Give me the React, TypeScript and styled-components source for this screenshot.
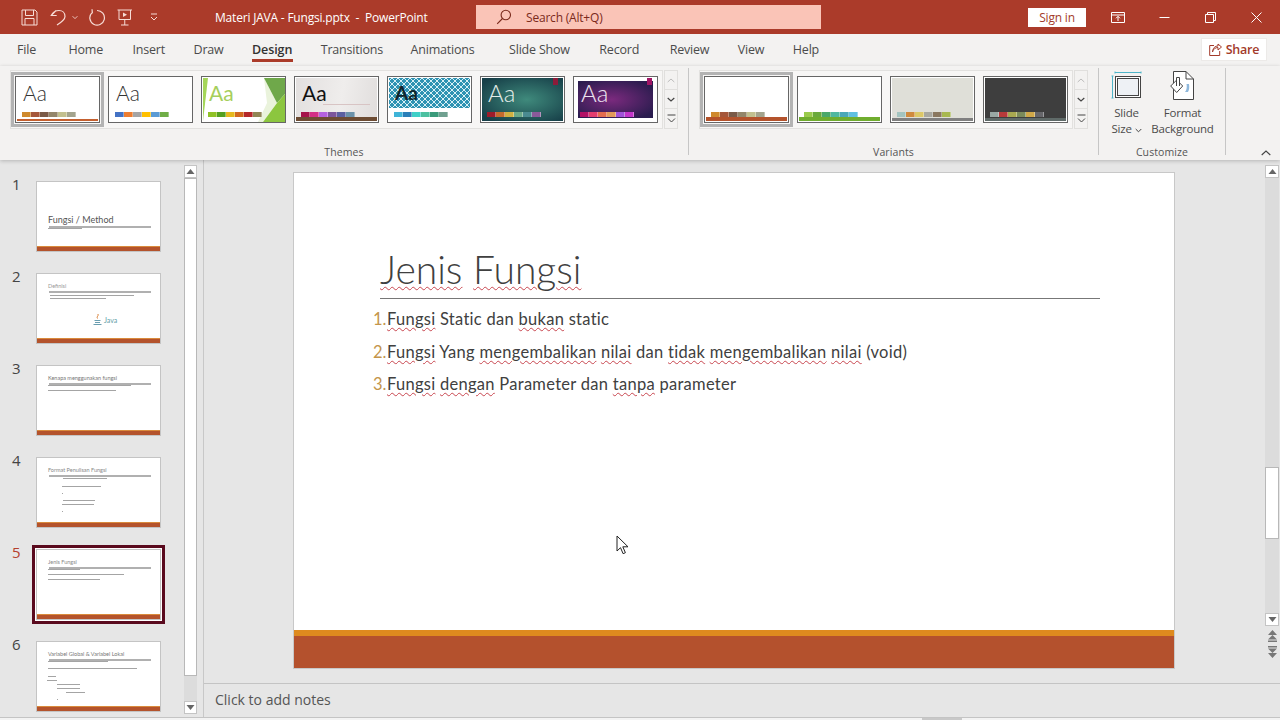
import React from 'react';
import styled, { createGlobalStyle } from 'styled-components';

const uiFont = '"Open Sans", "Noto Sans", "Liberation Sans", sans-serif';
const slideFont = 'Lato, "Open Sans", "Liberation Sans", sans-serif';

const GlobalStyle = createGlobalStyle`
  html, body { margin: 0; padding: 0; background: #e6e6e6; }
  * { box-sizing: border-box; }
`;

const Window = styled.div`
  position: relative;
  width: 1280px;
  height: 720px;
  overflow: hidden;
  display: flex;
  flex-direction: column;
  font-family: ${uiFont};
  color: #444;
`;

/* title bar */
const TitleBar = styled.header`
  height: 34px;
  flex: none;
  display: flex;
  align-items: center;
  padding: 0 0 0 14px;
  background: #ab3b2a;
  color: #fff;
`;
const QatButton = styled.div<{ $w: number }>`
  width: ${(p) => p.$w}px;
  height: 34px;
  display: flex;
  align-items: center;
  justify-content: center;
`;
const DocTitle = styled.div`
  width: 261px;
  margin-left: 41px;
  font-size: 12px;
  letter-spacing: -0.2px;
  white-space: pre;
`;
const SearchBox = styled.div`
  width: 345px;
  height: 24px;
  display: flex;
  align-items: center;
  padding-left: 20px;
  gap: 14px;
  background: #fac4b7;
  color: #7a2a1c;
  font-size: 12px;
  letter-spacing: -0.2px;
`;
const SignIn = styled.div`
  width: 58px;
  height: 19px;
  margin-left: auto;
  margin-right: 9px;
  display: flex;
  align-items: center;
  justify-content: center;
  background: #fff;
  color: #a33a2a;
  font-size: 12px;
  letter-spacing: -0.2px;
`;
const WindowControls = styled.div`
  display: flex;
  margin-right: 1px;
`;
const WindowButton = styled.div`
  width: 46px;
  height: 34px;
  display: flex;
  align-items: center;
  justify-content: center;
`;

/* tabs */
const TabRow = styled.nav`
  height: 32px;
  flex: none;
  display: flex;
  align-items: center;
  padding-left: 17px;
  background: #f3f2f1;
  font-size: 12.5px;
  letter-spacing: -0.2px;
  color: #4b4b4b;
`;
const Tab = styled.div<{ $active?: boolean; $gap: number }>`
  position: relative;
  height: 32px;
  line-height: 31px;
  margin-left: ${(p) => p.$gap}px;
  white-space: nowrap;
  ${(p) => p.$active && 'color: #333; font-weight: 600; letter-spacing: -0.1px;'}
  &::after {
    content: '';
    display: ${(p) => (p.$active ? 'block' : 'none')};
    position: absolute;
    left: 0;
    right: -1px;
    bottom: 4px;
    height: 3px;
    background: #ab3b2a;
  }
`;
const ShareButton = styled.div`
  width: 66px;
  height: 23px;
  margin-left: auto;
  margin-right: 13px;
  margin-top: -2px;
  display: flex;
  align-items: center;
  justify-content: center;
  gap: 4px;
  background: #fff;
  border: 1px solid #eceae8;
  color: #a33a2a;
  font-size: 12.5px;
  font-weight: 600;
  letter-spacing: -0.2px;
`;

/* ribbon */
const Ribbon = styled.section`
  position: relative;
  z-index: 1;
  height: 94px;
  flex: none;
  display: flex;
  padding: 2px 0 0 10px;
  background: #f3f2f1;
  box-shadow: 0 1px 4px rgba(0, 0, 0, 0.22);
`;
const RibbonGroup = styled.div<{ $w: number; $pad?: number }>`
  width: ${(p) => p.$w}px;
  height: 91px;
  display: flex;
  flex-direction: column;
  padding-left: ${(p) => p.$pad ?? 0}px;
  background: linear-gradient(#c6c6c6, #c6c6c6) right top / 1px 87px no-repeat;
`;
const GroupBody = styled.div`
  display: flex;
  margin-top: 2px;
`;
const GroupLabel = styled.div<{ $trim: number }>`
  margin-top: auto;
  height: 14px;
  line-height: 14px;
  text-align: center;
  font-size: 10.5px;
  letter-spacing: 0.1px;
  color: #555;
  padding-right: ${(p) => p.$trim}px;
`;
const Gallery = styled.div`
  display: flex;
  height: 59px;
  padding: 1px 0;
  border: 1px solid #e2e1df;
  background: #f7f6f5;
`;
const CardFrame = styled.div<{ $selected?: boolean }>`
  width: 93px;
  height: 55px;
  padding: 1px;
  border: 3px solid ${(p) => (p.$selected ? '#b3b3b3' : 'transparent')};
  background: ${(p) => (p.$selected ? '#f7f6f5' : 'transparent')};
`;
const Card = styled.div<{ $bg: string; $ring?: boolean }>`
  position: relative;
  width: 85px;
  height: 47px;
  overflow: hidden;
  display: flex;
  flex-direction: column;
  border: 1px solid #666;
  background: ${(p) => p.$bg};
  ${(p) => p.$ring && 'box-shadow: inset 0 0 0 1px #fff;'}
`;
const CardLetters = styled.div<{ $color: string; $weight: number; $size: number }>`
  position: relative;
  height: 30px;
  padding: 3px 0 0 7px;
  font-size: ${(p) => p.$size}px;
  line-height: 26px;
  font-family: ${slideFont};
  font-weight: ${(p) => p.$weight};
  color: ${(p) => p.$color};
`;
const SwatchRow = styled.div`
  position: relative;
  display: flex;
  height: 5px;
  margin-top: auto;
  margin-bottom: 5px;
  padding-left: 6px;
`;
const Swatch = styled.span<{ $color: string }>`
  width: 9px;
  height: 5px;
  background: ${(p) => p.$color};
  border-right: 1px solid rgba(255, 255, 255, 0.35);
`;
const CardBar = styled.div<{ $color: string; $h: number; $inset: number }>`
  position: absolute;
  left: ${(p) => p.$inset}px;
  right: ${(p) => p.$inset}px;
  bottom: 1px;
  height: ${(p) => p.$h}px;
  background: ${(p) => p.$color};
`;
const CardPattern = styled.div`
  position: absolute;
  left: 1px;
  right: 1px;
  top: 1px;
  height: 30px;
  background:
    radial-gradient(circle at center, transparent 0 1.6px, #d9f0f5 1.6px 2.6px, transparent 2.6px) 0 0 / 6px 6px,
    #2f93b3;
`;
const CardTag = styled.div<{ $color: string; $right: number }>`
  position: absolute;
  top: 1px;
  right: ${(p) => p.$right}px;
  width: 5px;
  height: 7px;
  background: ${(p) => p.$color};
`;
const CardFill = styled.div<{ $bg: string }>`
  position: absolute;
  left: 4px;
  right: 4px;
  top: 4px;
  bottom: 4px;
  background: ${(p) => p.$bg};
`;
const CardHairline = styled.div`
  position: absolute;
  left: 28px;
  right: 8px;
  top: 27px;
  height: 1px;
  background: #d8c4c4;
`;
const GalleryArrows = styled.div`
  display: flex;
  flex-direction: column;
  margin-left: 1px;
  height: 59px;
`;
const ArrowCell = styled.div<{ $dim?: boolean; $h: number }>`
  width: 14px;
  height: ${(p) => p.$h}px;
  display: flex;
  align-items: center;
  justify-content: center;
  border: 1px solid #e0dfdd;
  border-top-width: ${(p) => (p.$dim ? 1 : 0)}px;
`;
const CommandRow = styled.div`
  display: flex;
`;
const Command = styled.div<{ $w: number }>`
  width: ${(p) => p.$w}px;
  display: flex;
  flex-direction: column;
  align-items: center;
  font-size: 11.5px;
  line-height: 15.5px;
  letter-spacing: -0.2px;
  color: #4b4b4b;
  white-space: nowrap;
`;
const CommandIcon = styled.div`
  height: 37px;
  padding-top: 3px;
`;
const CollapseButton = styled.div`
  display: flex;
  margin-left: 35px;
  margin-top: 82px;
  height: 6px;
`;

/* workspace */
const Workspace = styled.main`
  flex: 1;
  min-height: 0;
  display: flex;
  background: #e6e6e6;
  border-bottom: 1px solid #c4c4c4;
`;
const ThumbPane = styled.aside`
  width: 204px;
  flex: none;
  display: flex;
  border-right: 1px solid #c8c8c8;
`;
const ThumbList = styled.div`
  width: 184px;
  padding-top: 17px;
  overflow: hidden;
`;
const ThumbRow = styled.div`
  height: 92px;
  display: flex;
  padding-left: 12px;
`;
const ThumbNumber = styled.div<{ $active?: boolean }>`
  width: 20px;
  margin-top: -1px;
  font-size: 15px;
  line-height: 16px;
  color: ${(p) => (p.$active ? '#b5402e' : '#444')};
`;
const ThumbFrame = styled.div<{ $active?: boolean }>`
  width: 133px;
  height: 79px;
  padding: 1px;
  border: 3px solid ${(p) => (p.$active ? '#5a0a1e' : 'transparent')};
  background: ${(p) => (p.$active ? '#fff' : 'transparent')};
`;
const Thumb = styled.div<{ $top: number }>`
  width: 125px;
  height: 71px;
  display: flex;
  flex-direction: column;
  padding-top: ${(p) => p.$top}px;
  background: #fff;
  border: 1px solid #c4c4c4;
  font-family: ${slideFont};
`;
const ThumbTitle = styled.div<{ $size: number; $h: number; $color: string }>`
  height: ${(p) => p.$h}px;
  line-height: ${(p) => p.$h}px;
  margin-left: 11px;
  font-size: ${(p) => p.$size}px;
  color: ${(p) => p.$color};
  white-space: nowrap;
`;
const ThumbRule = styled.div`
  width: 102px;
  height: 2px;
  flex: none;
  margin-left: 12px;
  background: #b0b0b0;
`;
const ThumbLine = styled.div<{ $left: number; $w: number; $gap: number }>`
  width: ${(p) => p.$w}px;
  height: 1px;
  flex: none;
  margin: ${(p) => p.$gap}px 0 0 ${(p) => p.$left}px;
  background: #a4a4a4;
`;
const ThumbFooter = styled.div`
  margin-top: auto;
  height: 5px;
  background: #b4532c;
  border-top: 1px solid #d98a3c;
`;
const JavaMark = styled.div`
  display: flex;
  align-items: center;
  gap: 1px;
  margin: 15px 0 0 56px;
  font-size: 7px;
  line-height: 10px;
  color: #5f9ea8;
`;
const ScrollColumn = styled.div`
  width: 13px;
  display: flex;
  flex-direction: column;
  padding-top: 5px;
`;
const ScrollButton = styled.div`
  width: 100%;
  height: 13px;
  flex: none;
  display: flex;
  align-items: center;
  justify-content: center;
  background: #fff;
  border: 1px solid #c4c4c4;
`;
const ScrollTrack = styled.div<{ $h: number }>`
  height: ${(p) => p.$h}px;
  flex: none;
  overflow: hidden;
  background: #dcdcdc;
`;
const ScrollThumb = styled.div<{ $top: number; $h: number }>`
  height: ${(p) => p.$h}px;
  margin-top: ${(p) => p.$top}px;
  background: #fff;
  border: 1px solid #b8b8b8;
`;
const EditorColumn = styled.div`
  flex: 1;
  min-width: 0;
  display: flex;
  flex-direction: column;
`;
const EditorRow = styled.div`
  height: 523px;
  flex: none;
  display: flex;
`;
const CanvasArea = styled.div`
  flex: 1;
  padding: 13px 0 0 90px;
`;
const SlideSheet = styled.article`
  width: 880px;
  height: 495px;
  display: flex;
  flex-direction: column;
  background: #fff;
  box-shadow: 0 0 0 1px #c8c8c8;
  font-family: ${slideFont};
`;
const SlideTitle = styled.h1`
  margin: 70px 0 0 86px;
  height: 55px;
  line-height: 52px;
  font-size: 39px;
  font-weight: 300;
  color: #404040;
`;
const Misspelled = styled.span`
  text-decoration: underline wavy #c8464f 1px;
  text-underline-offset: 2px;
`;
const SlideRule = styled.div`
  width: 720px;
  height: 1px;
  margin-left: 86px;
  background: #777;
`;
const PointList = styled.ol`
  list-style: none;
  margin: 4px 0 0 79px;
  padding: 0;
`;
const Point = styled.li`
  height: 32.5px;
  line-height: 32.5px;
  display: flex;
  font-size: 16.5px;
  letter-spacing: 0.28px;
  color: #404040;
  white-space: pre;
`;
const PointNumber = styled.span`
  width: 14px;
  letter-spacing: 0;
  font-size: 16.5px;
  color: #c4954a;
`;
const SlideFooter = styled.div`
  margin-top: auto;
  height: 38px;
  background: #b4512d;
  border-top: 6px solid #de8a1e;
`;
const SideScroll = styled(ScrollColumn)`
  width: 14px;
  margin-right: 1px;
`;
const PageButton = styled.div<{ $gap: number }>`
  height: 13px;
  margin-top: ${(p) => p.$gap}px;
  display: flex;
  justify-content: center;
`;
const NotesBar = styled.div`
  flex: 1;
  display: flex;
  align-items: center;
  padding: 0 0 2px 11px;
  border-top: 1px solid #c4c4c4;
  font-size: 14px;
  color: #555;
`;
const StatusStrip = styled.div`
  height: 2px;
  flex: none;
  padding-left: 922px;
  background: #f3f3f3;
`;
const StatusHandle = styled.div`
  width: 40px;
  height: 2px;
  background: #c8c8c8;
`;
const CursorLayer = styled.div`
  position: absolute;
  left: 616px;
  top: 535px;
  line-height: 0;
`;

/* icons */
const SaveIcon = () => (
  <svg width="17" height="17" viewBox="0 0 17 17" fill="none" stroke="#f7dcd6" strokeWidth="1">
    <path d="M1 1h13l2 2v13H1z" />
    <path d="M4.500 1v5.500h8V1M4 16v-6.500h9V16" />
  </svg>
);
const UndoIcon = () => (
  <svg width="16" height="17" viewBox="0 0 16 17" fill="none" stroke="#f7dcd6" strokeWidth="1.200">
    <path d="M6 1.500L1.200 6.500h5.500M1.200 6.500C3 3 6 1.500 9 1.500c3.500 0 6 2.500 6 6 0 3.500-4 6-8 8.500" />
  </svg>
);
const RedoIcon = () => (
  <svg width="17" height="18" viewBox="0 0 17 18" fill="none" stroke="#f7dcd6" strokeWidth="1.200">
    <path d="M8 2.500A7.300 7.300 0 1 1 2.800 4.800" />
    <path d="M3 1.200L3.400 5.400" />
  </svg>
);
const PresentIcon = () => (
  <svg width="16" height="17" viewBox="0 0 16 17" fill="none" stroke="#f7dcd6" strokeWidth="1">
    <path d="M.5 1h14.500M2 1v9.500h11.500V1M7.750 10.500V16M4 16h7.500" />
    <path d="M6 3.500l4 2.250-4 2.250z" fill="#f7dcd6" stroke="none" />
  </svg>
);
const MiniChevron = ({ color = '#f7dcd6' }: { color?: string }) => (
  <svg width="7" height="5" viewBox="0 0 7 5" fill="none" stroke={color} strokeWidth="1">
    <path d="M.7 1l2.800 2.800L6.300 1" />
  </svg>
);
const CustomizeIcon = () => (
  <svg width="8" height="8" viewBox="0 0 8 8" fill="none" stroke="#f7dcd6" strokeWidth="1">
    <path d="M1 1h6M1 4l3 3 3-3" />
  </svg>
);
const SearchIcon = () => (
  <svg width="16" height="16" viewBox="0 0 16 16" fill="none" stroke="#7a2a1c" strokeWidth="1.100">
    <circle cx="9.800" cy="6" r="4.700" />
    <path d="M6.500 9.500L1.200 14.800" />
  </svg>
);
const RibbonDisplayIcon = () => (
  <svg width="14" height="11" viewBox="0 0 14 11" fill="none" stroke="#fff" strokeWidth="1">
    <path d="M.5.500h13v10H.500zM.5 3h13M7 9V4.500M5 6.300l2-2 2 2" />
  </svg>
);
const RestoreIcon = () => (
  <svg width="11" height="11" viewBox="0 0 11 11" fill="none" stroke="#fff" strokeWidth="1">
    <path d="M.5 2.500h8v8h-8zM2.500 2.500V.500h8v8h-2" />
  </svg>
);
const CloseIcon = () => (
  <svg width="11" height="11" viewBox="0 0 11 11" fill="none" stroke="#fff" strokeWidth="1">
    <path d="M.5.500l10 10M10.500.500l-10 10" />
  </svg>
);
const MinimizeIcon = () => (
  <svg width="11" height="11" viewBox="0 0 11 11" fill="none" stroke="#fff" strokeWidth="1">
    <path d="M.5 5.500h10" />
  </svg>
);
const ShareIcon = () => (
  <svg width="13" height="13" viewBox="0 0 13 13" fill="none" stroke="#a33a2a" strokeWidth="1">
    <path d="M5 2.500H.700v10h10V8" />
    <path d="M3.500 9c.5-3 3-4.500 5.500-4.500V7L12.500 4 9 1v2C6 3 3.800 5 3.500 9z" />
  </svg>
);
const SlideSizeIcon = () => (
  <svg width="31" height="28" viewBox="0 0 31 28" fill="none">
    <path d="M4 1.500h26M4 .500v2M30 .500v2M1.500 5v22M.500 5h2M.500 27h2" stroke="#4fb4c8" strokeWidth="1" />
    <rect x="4.500" y="5.500" width="25" height="21" fill="#fff" stroke="#444" />
    <rect x="6.500" y="7.500" width="21" height="17" fill="#eef1f5" stroke="#444" />
  </svg>
);
const FormatBackgroundIcon = () => (
  <svg width="25" height="29" viewBox="0 0 25 29" fill="none">
    <path d="M3.500.500H16l7.500 7.500v20.500H3.500z" fill="#fff" stroke="#444" />
    <path d="M16 .500V8h7.500" stroke="#444" />
    <path d="M.700 15l6-6 6 6-6 6.500z" fill="#fff" stroke="#444" />
    <path d="M6.500 15V6.500h3V15" fill="#fff" stroke="#444" />
    <path d="M15 21c2-2 2-6 1.500-8h2.500c.5 3 .3 6-1 8z" fill="#8fb8dc" />
  </svg>
);
const Triangle = ({ down, color = '#666' }: { down?: boolean; color?: string }) => (
  <svg width="9" height="5" viewBox="0 0 9 5" fill={color}>
    <path d={down ? 'M.5 0h8L4.500 5z' : 'M.5 5h8L4.500 0z'} />
  </svg>
);
const PageIcon = ({ down }: { down?: boolean }) => (
  <svg width="11" height="12" viewBox="0 0 11 12" fill="#777">
    <path d={down ? 'M1 0h9v1.500H1zM1 2.500h9L5.500 7zM1 7h9L5.500 12z' : 'M1 10.500h9V12H1zM1 9.500h9L5.500 5zM1 5h9L5.500 0z'} />
  </svg>
);
const MoreIcon = () => (
  <svg width="9" height="9" viewBox="0 0 9 9" fill="none" stroke="#444" strokeWidth="1">
    <path d="M.5 1h8M1 4.500l3.500 3.500L8 4.500" />
  </svg>
);
const FacetArt = () => (
  <svg width="83" height="45" viewBox="0 0 83 45" style={{ position: 'absolute', left: 0, top: 0 }}>
    <path d="M1 1h5L1 44z" fill="#a5d65a" />
    <path d="M62 1l13 25-14 19h-5l9-19z" fill="#eaf3dc" />
    <path d="M62 1h21v16l-8 9z" fill="#6fa84a" />
    <path d="M75 26l8-9v28H61z" fill="#8cc63f" />
  </svg>
);
const JavaCup = () => (
  <svg width="10" height="11" viewBox="0 0 10 11" fill="none">
    <path d="M5 0c1 2-2 2.500-.5 4.500" stroke="#d9823a" strokeWidth="1" />
    <path d="M1.500 6.500h6M2 8.500h5M.5 10.500h8" stroke="#6a9eb0" strokeWidth="1" />
  </svg>
);
const Cursor = () => (
  <svg width="13" height="20" viewBox="0 0 13 20" fill="#fff" stroke="#222" strokeWidth="1">
    <path d="M1 1v15l3.500-3.300 2.600 6 2.300-1-2.600-5.900H12z" />
  </svg>
);

/* data */
type ThemeCard = {
  bg: string;
  letters?: string;
  weight?: number;
  size?: number;
  ring?: boolean;
  swatches: string[];
  bar?: [string, number, number];
  art?: React.ReactNode;
};

const themes: ThemeCard[] = [
  {
    bg: '#fff',
    letters: '#333',
    weight: 300,
    swatches: ['#cf8a2e', '#a5573a', '#7a5a47', '#93866a', '#c2c08f', '#a3a48e'],
    bar: ['#c4602f', 2, 1],
  },
  {
    bg: '#fff',
    letters: '#333',
    weight: 300,
    swatches: ['#4472c4', '#ed7d31', '#a5a5a5', '#ffc000', '#5b9bd5', '#70ad47'],
  },
  {
    bg: '#fff',
    letters: '#a6cf5c',
    weight: 400,
    swatches: ['#90c226', '#54a021', '#e6b91e', '#d2691e', '#b5282a', '#918655'],
    art: <FacetArt />,
  },
  {
    bg: 'linear-gradient(100deg, #e2dfde, #efedec 55%, #e0dddc)',
    letters: '#111',
    weight: 400,
    ring: true,
    swatches: ['#a5144a', '#d32f86', '#b561e0', '#7c559c', '#5b5fa0', '#6b92aa'],
    bar: ['#6d4c33', 4, 1],
    art: <CardHairline />,
  },
  {
    bg: '#fff',
    letters: '#10252c',
    weight: 700,
    size: 19,
    swatches: ['#3fb4d8', '#2a7fb8', '#3fd0c8', '#4cc0a0', '#3a9a7a', '#70a090'],
    art: <CardPattern />,
  },
  {
    bg: 'radial-gradient(ellipse at 55% 50%, #3f8a7c, #174049 85%)',
    letters: '#e2ece8',
    weight: 300,
    size: 24,
    ring: true,
    swatches: ['#9c1c2a', '#c46a2c', '#d0b040', '#6aa888', '#4a8a90', '#8a5a9a'],
    art: <CardTag $color="#8c1c3a" $right={6} />,
  },
  {
    bg: '#fff',
    letters: '#ece4f0',
    weight: 300,
    size: 24,
    swatches: ['#b31166', '#e33d6f', '#e46c4e', '#e39a5a', '#a052d8', '#c234c8'],
    art: (
      <>
        <CardFill $bg="radial-gradient(ellipse at 45% 50%, #7b2a7e, #2a1c4e 85%)" />
        <CardTag $color="#a01565" $right={5} />
      </>
    ),
  },
];

const variants: ThemeCard[] = [
  {
    bg: '#fff',
    swatches: ['#cf8a2e', '#a5573a', '#7a5a47', '#93866a', '#c2c08f', '#a3a48e'],
    bar: ['#b4532c', 4, 1],
  },
  {
    bg: '#fff',
    swatches: ['#9acb4c', '#6aaa3c', '#4aa86a', '#50b8a0', '#4aa8b8', '#60c0e0'],
    bar: ['#70ad2f', 4, 1],
  },
  {
    bg: '#dfdfd8',
    ring: true,
    swatches: ['#a3c4c0', '#cf8a3e', '#dcc868', '#a8a8a0', '#8a7860', '#a8b850'],
    bar: ['#808080', 3, 1],
  },
  {
    bg: '#3e3e3e',
    ring: true,
    swatches: ['#9aa8a4', '#b83a3a', '#a8a850', '#7a8a5a', '#d0a848', '#66666a'],
    bar: ['#5f6a68', 3, 1],
  },
];

type Slide = {
  title: string;
  size: number;
  top: number;
  h: number;
  color: string;
  lines: [number, number, number][];
  java?: boolean;
};

const slides: Slide[] = [
  { title: 'Fungsi / Method', size: 9, top: 32, h: 12, color: '#555', lines: [[11, 34, 0]] },
  { title: 'Definisi', size: 5.500, top: 7, h: 10, color: '#999', lines: [[13, 84, 2], [13, 56, 2]], java: true },
  {
    title: 'Kenapa menggunakan fungsi',
    size: 5.500,
    top: 7,
    h: 10,
    color: '#777',
    lines: [[11, 83, 0], [11, 68, 4]],
  },
  {
    title: 'Format Penulisan Fungsi',
    size: 5.500,
    top: 7,
    h: 10,
    color: '#888',
    lines: [[26, 44, 1], [25, 39, 7], [25, 1, 6], [26, 32, 6], [25, 32, 3], [25, 1, 6]],
  },
  {
    title: 'Jenis Fungsi',
    size: 5.500,
    top: 7,
    h: 10,
    color: '#888',
    lines: [[11, 32, 0], [11, 76, 4], [11, 52, 4]],
  },
  {
    title: 'Variabel Global & Variabel Lokal',
    size: 5.500,
    top: 7,
    h: 10,
    color: '#777',
    lines: [[11, 60, 0], [11, 89, 6], [11, 8, 7], [10, 10, 3], [20, 23, 3], [20, 23, 3], [29, 19, 3], [20, 1, 6]],
  },
];

const tabs: [string, number][] = [
  ['File', 0],
  ['Home', 32.5],
  ['Insert', 29.5],
  ['Draw', 28.5],
  ['Design', 28.5],
  ['Transitions', 28.5],
  ['Animations', 27.5],
  ['Slide Show', 34.5],
  ['Record', 29.5],
  ['Review', 30.5],
  ['View', 28.5],
  ['Help', 28.5],
];

const GalleryCard = ({ card, selected }: { card: ThemeCard; selected?: boolean }) => (
  <CardFrame $selected={selected}>
    <Card $bg={card.bg} $ring={card.ring}>
      {card.art}
      {card.letters && (
        <CardLetters $color={card.letters} $weight={card.weight ?? 400} $size={card.size ?? 21}>
          Aa
        </CardLetters>
      )}
      <SwatchRow>
        {card.swatches.map((c) => (
          <Swatch key={c} $color={c} />
        ))}
      </SwatchRow>
      {card.bar && <CardBar $color={card.bar[0]} $h={card.bar[1]} $inset={card.bar[2]} />}
    </Card>
  </CardFrame>
);

const GalleryControls = () => (
  <GalleryArrows>
    <ArrowCell $dim $h={20}>
      <svg width="8" height="5" viewBox="0 0 8 5" fill="none" stroke="#bbb">
        <path d="M.7 4L4 1l3.300 3" />
      </svg>
    </ArrowCell>
    <ArrowCell $h={19}>
      <svg width="8" height="5" viewBox="0 0 8 5" fill="none" stroke="#444" strokeWidth="1.200">
        <path d="M.7 1L4 4l3.300-3" />
      </svg>
    </ArrowCell>
    <ArrowCell $h={20}>
      <MoreIcon />
    </ArrowCell>
  </GalleryArrows>
);

export default function App(): React.ReactElement {
  return (
    <Window>
      <GlobalStyle />
      <TitleBar>
        <QatButton $w={30}>
          <SaveIcon />
        </QatButton>
        <QatButton $w={28}>
          <UndoIcon />
        </QatButton>
        <QatButton $w={6}>
          <MiniChevron />
        </QatButton>
        <QatButton $w={38}>
          <RedoIcon />
        </QatButton>
        <QatButton $w={18}>
          <PresentIcon />
        </QatButton>
        <QatButton $w={40}>
          <CustomizeIcon />
        </QatButton>
        <DocTitle>Materi JAVA - Fungsi.pptx  -  PowerPoint</DocTitle>
        <SearchBox>
          <SearchIcon />
          Search (Alt+Q)
        </SearchBox>
        <SignIn>Sign in</SignIn>
        <WindowControls>
          <WindowButton>
            <RibbonDisplayIcon />
          </WindowButton>
          <WindowButton>
            <MinimizeIcon />
          </WindowButton>
          <WindowButton>
            <RestoreIcon />
          </WindowButton>
          <WindowButton>
            <CloseIcon />
          </WindowButton>
        </WindowControls>
      </TitleBar>

      <TabRow>
        {tabs.map(([t, gap]) => (
          <Tab key={t} $gap={gap} $active={t === 'Design'}>
            {t}
          </Tab>
        ))}
        <ShareButton>
          <ShareIcon />
          Share
        </ShareButton>
      </TabRow>

      <Ribbon>
        <RibbonGroup $w={679}>
          <GroupBody>
            <Gallery>
              {themes.map((c, i) => (
                <GalleryCard key={i} card={c} selected={i === 0} />
              ))}
            </Gallery>
            <GalleryControls />
          </GroupBody>
          <GroupLabel $trim={11}>Themes</GroupLabel>
        </RibbonGroup>
        <RibbonGroup $w={410} $pad={10}>
          <GroupBody>
            <Gallery>
              {variants.map((c, i) => (
                <GalleryCard key={i} card={c} selected={i === 0} />
              ))}
            </Gallery>
            <GalleryControls />
          </GroupBody>
          <GroupLabel $trim={11}>Variants</GroupLabel>
        </RibbonGroup>
        <RibbonGroup $w={127}>
          <CommandRow>
            <Command $w={55}>
              <CommandIcon>
                <SlideSizeIcon />
              </CommandIcon>
              <span>Slide</span>
              <span>
                Size <MiniChevron color="#444" />
              </span>
            </Command>
            <Command $w={57}>
              <CommandIcon>
                <FormatBackgroundIcon />
              </CommandIcon>
              <span>Format</span>
              <span>Background</span>
            </Command>
          </CommandRow>
          <GroupLabel $trim={1}>Customize</GroupLabel>
        </RibbonGroup>
        <CollapseButton>
          <svg width="10" height="6" viewBox="0 0 10 6" fill="none" stroke="#444" strokeWidth="1.100">
            <path d="M.7 5L5 1l4.300 4" />
          </svg>
        </CollapseButton>
      </Ribbon>

      <Workspace>
        <ThumbPane>
          <ThumbList>
            {slides.map((s, i) => (
              <ThumbRow key={s.title}>
                <ThumbNumber $active={i === 4}>{i + 1}</ThumbNumber>
                <ThumbFrame $active={i === 4}>
                  <Thumb $top={s.top}>
                    <ThumbTitle $size={s.size} $h={s.h} $color={s.color}>
                      {s.title}
                    </ThumbTitle>
                    <ThumbRule />
                    {s.lines.map((l, j) => (
                      <ThumbLine key={j} $left={l[0]} $w={l[1]} $gap={l[2]} />
                    ))}
                    {s.java && (
                      <JavaMark>
                        <JavaCup />
                        Java
                      </JavaMark>
                    )}
                    <ThumbFooter />
                  </Thumb>
                </ThumbFrame>
              </ThumbRow>
            ))}
          </ThumbList>
          <ScrollColumn>
            <ScrollButton>
              <Triangle />
            </ScrollButton>
            <ScrollTrack $h={523}>
              <ScrollThumb $top={0} $h={498} />
            </ScrollTrack>
            <ScrollButton>
              <Triangle down />
            </ScrollButton>
          </ScrollColumn>
        </ThumbPane>

        <EditorColumn>
          <EditorRow>
            <CanvasArea>
              <SlideSheet>
                <SlideTitle>
                  <Misspelled>Jenis</Misspelled> <Misspelled>Fungsi</Misspelled>
                </SlideTitle>
                <SlideRule />
                <PointList>
                  <Point>
                    <PointNumber>1.</PointNumber>
                    <span>
                      <Misspelled>Fungsi</Misspelled> Static dan <Misspelled>bukan</Misspelled> static
                    </span>
                  </Point>
                  <Point>
                    <PointNumber>2.</PointNumber>
                    <span>
                      <Misspelled>Fungsi</Misspelled> Yang <Misspelled>mengembalikan</Misspelled>{' '}
                      <Misspelled>nilai</Misspelled> dan <Misspelled>tidak</Misspelled>{' '}
                      <Misspelled>mengembalikan</Misspelled> <Misspelled>nilai</Misspelled> (void)
                    </span>
                  </Point>
                  <Point>
                    <PointNumber>3.</PointNumber>
                    <span>
                      <Misspelled>Fungsi</Misspelled> <Misspelled>dengan</Misspelled> Parameter dan{' '}
                      <Misspelled>tanpa</Misspelled> parameter
                    </span>
                  </Point>
                </PointList>
                <SlideFooter />
              </SlideSheet>
            </CanvasArea>
            <SideScroll>
              <ScrollButton>
                <Triangle />
              </ScrollButton>
              <ScrollTrack $h={435}>
                <ScrollThumb $top={289} $h={72} />
              </ScrollTrack>
              <ScrollButton>
                <Triangle down />
              </ScrollButton>
              <PageButton $gap={4}>
                <PageIcon />
              </PageButton>
              <PageButton $gap={3}>
                <PageIcon down />
              </PageButton>
            </SideScroll>
          </EditorRow>
          <NotesBar>Click to add notes</NotesBar>
        </EditorColumn>
      </Workspace>
      <StatusStrip>
        <StatusHandle />
      </StatusStrip>

      <CursorLayer>
        <Cursor />
      </CursorLayer>
    </Window>
  );
}
